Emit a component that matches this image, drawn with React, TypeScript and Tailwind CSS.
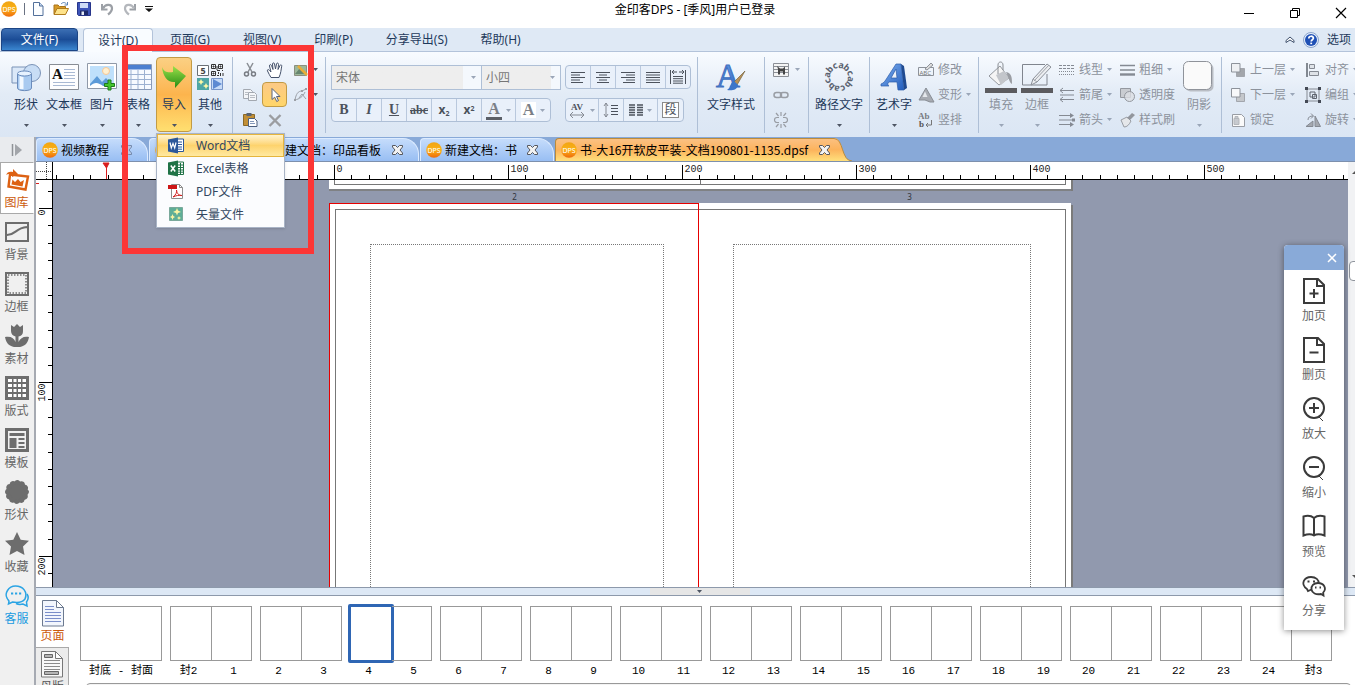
import { useState, type ReactNode } from "react";

const UI_FONT = "font-['Noto_Sans','Noto_Sans_CJK_SC',sans-serif]";
const DOC_FONT = "font-['Noto_Sans_CJK_SC',sans-serif]";
const STRIP_FONT = "font-['Liberation_Mono','Noto_Sans_CJK_SC',monospace]";

const RIBBON_TABS = ["页面(G)", "视图(V)", "印刷(P)", "分享导出(S)", "帮助(H)"];
const RULER_STEP = 17.4;
const G = "#858a93";

type IconProps = { w?: number; h?: number; box?: string; children: ReactNode };

const Svg = ({ w = 16, h = 16, box, children }: IconProps) => (
  <svg width={w} height={h} viewBox={box ?? `0 0 ${w} ${h}`} fill="none" className="shrink-0 overflow-visible" aria-hidden="true">
    {children}
  </svg>
);

const Caret = ({ dim = false }: { dim?: boolean }) => (
  <Svg w={5} h={3}>
    <path d="M0 0h5L2.5 3z" fill={dim ? "#9aa6b8" : "#4d5563"} />
  </Svg>
);

const DpsLogo = ({ size = 16 }: { size?: number }) => (
  <Svg w={size} h={size} box="0 0 16 16">
    <defs>
      <linearGradient id="dps" x1="0" y1="0" x2="0" y2="1">
        <stop offset="0" stopColor="#f0a413" />
        <stop offset="0.5" stopColor="#fbb216" />
        <stop offset="1" stopColor="#ee6a0c" />
      </linearGradient>
    </defs>
    <circle cx="8" cy="8" r="7.8" fill="url(#dps)" />
    <text x="8" y="10.6" fontSize="7" textAnchor="middle" fill="#fff" fontFamily="Noto Sans">DPS</text>
  </Svg>
);

/* ---------- title bar ---------- */

const quickActions = [
  {
    label: "新建",
    icon: (
      <Svg>
        <path d="M3.500 1.500h6l3.500 3.500v9.500h-9.500z" fill="#fbfdff" stroke="#53709b" />
        <path d="M9.500 1.500v3.500h3.500" fill="#c9dcf3" stroke="#53709b" />
      </Svg>
    )
  },
  {
    label: "打开",
    icon: (
      <Svg>
        <path d="M1 13V4h4l1.500 1.500h6V13z" fill="#d79a26" stroke="#a9731b" />
        <path d="M1 13.500 4 7.500h11.500L12.500 13.500z" fill="#fde28a" stroke="#b07c1d" />
        <path d="M8 3c2-2 4-2 6 .5M14.500 1v3h-3" stroke="#5b82b5" />
      </Svg>
    )
  },
  {
    label: "保存",
    icon: (
      <Svg>
        <path d="M1.500 1.500h13v13h-12l-1-1z" fill="#3d54b8" stroke="#27358a" />
        <path d="M4 2h8v5H4z" fill="#cfdcf6" />
        <path d="M4 9.500h8V14H4z" fill="#1e2a6a" />
        <path d="M5.500 10.500h2.500V14H5.500z" fill="#e6ecf8" />
      </Svg>
    )
  },
  {
    label: "撤销",
    icon: (
      <Svg>
        <path d="M3 3v5.500h5.500" stroke="#9ca0a6" strokeWidth="2" />
        <path d="M4 7.500C6 3 12.500 2.500 13 7c.2 3-2 5-4 6.500" stroke="#9ca0a6" strokeWidth="2.200" />
      </Svg>
    )
  },
  {
    label: "重做",
    icon: (
      <Svg>
        <path d="M13 3v5.500H7.500" stroke="#9ca0a6" strokeWidth="2" />
        <path d="M12 7.500C10 3 3.500 2.500 3 7c-.2 3 2 5 4 6.500" stroke="#b4b7bc" strokeWidth="2.200" />
      </Svg>
    )
  }
];

const TitleBar = () => (
  <header className="relative flex h-7 shrink-0 items-start bg-white">
    <div className="flex items-center gap-[7px] pt-px pl-px">
      <DpsLogo />
      <span className="h-3 w-px bg-gray-500" />
      <div className="-ml-0.5 flex gap-[7px]">
        {quickActions.map((item) => (
          <button key={item.label} type="button" aria-label={item.label}>
            {item.icon}
          </button>
        ))}
      </div>
      <button type="button" aria-label="自定义">
        <Svg w={8} h={6}>
          <path d="M0 0h8v1H0zM0 2.500h8L4 6z" fill="#111" />
        </Svg>
      </button>
    </div>
    <h1 className="absolute inset-x-0 top-px mx-auto w-fit pl-[35px] text-xs leading-[18px] text-black">
      金印客DPS - [季风]用户已登录
    </h1>
    <div className="relative ml-auto flex gap-[34px] pt-[7px] pr-2">
      <button type="button" aria-label="最小化">
        <Svg w={12} h={12}><path d="M1 6.500h10" stroke="#000" /></Svg>
      </button>
      <button type="button" aria-label="还原">
        <Svg w={12} h={12}><path d="M1.500 3.500h7v7h-7zM3.500 3.500v-2h7v7h-2" stroke="#000" /></Svg>
      </button>
      <button type="button" aria-label="关闭">
        <Svg w={12} h={12}><path d="m1 1 10 10M11 1 1 11" stroke="#000" strokeWidth="1.200" /></Svg>
      </button>
    </div>
  </header>
);

const RibbonTabs = () => (
  <nav className="flex h-6 shrink-0 items-end border-b border-[#b3c3da] bg-[#dfe9f5] text-xs text-[#1e395b]">
    <button
      type="button"
      className="ml-px h-[23px] w-[77px] rounded-t-sm border border-[#1c4585] bg-linear-to-b from-[#3c6fb4] via-[#1b4c96] to-[#3a86d0] text-white"
    >
      文件(F)
    </button>
    <button
      type="button"
      className="relative top-px ml-[5px] h-6 w-[70px] rounded-t border border-b-0 border-[#b3c3da] bg-[#f9fcff]"
    >
      设计(D)
    </button>
    <div className="ml-px flex h-full gap-px pt-px">
      {RIBBON_TABS.map((tab) => (
        <button key={tab} type="button" className="px-4">
          {tab}
        </button>
      ))}
    </div>
    <div className="ml-auto flex h-full items-center gap-2 pr-1">
      <button type="button" aria-label="折叠功能区">
        <Svg w={10} h={8}>
          <path d="M1 4.500 5 1l4 3.500v2L5 4 1 6.500z" fill="#fff" stroke="#3d4f6b" />
        </Svg>
      </button>
      <button type="button" aria-label="帮助">
        <Svg w={16} h={16}>
          <circle cx="8" cy="8" r="7.500" fill="#e6effb" stroke="#8ba4cc" />
          <circle cx="8" cy="8" r="6" fill="#1f50b5" />
          <path d="M5.800 6.500C5.800 3.500 10.500 3.500 10.400 6.300 10.300 7.800 8.200 7.800 8.200 9.500" stroke="#fff" strokeWidth="1.700" />
          <path d="M7.300 10.600h1.800v1.600H7.300z" fill="#fff" />
        </Svg>
      </button>
      <button type="button">选项</button>
    </div>
  </nav>
);

/* ---------- ribbon ---------- */

type BigButtonProps = { label: string; icon: ReactNode; width?: string; caret?: boolean; dim?: boolean; active?: boolean };

const BigButton = ({ label, icon, width = "w-9", caret = true, dim = false, active = false }: BigButtonProps) => (
  <button
    type="button"
    className={`flex h-[75px] ${width} shrink-0 flex-col items-center rounded-sm border pt-[3px] text-xs whitespace-nowrap ${
      active
        ? "border-[#c29b45] bg-linear-to-b from-[#fbd083] via-[#fcb44d] to-[#ffdf70]"
        : "border-transparent"
    } ${dim ? "text-[#8c929c]" : "text-[#1e395b]"}`}
  >
    <span className="flex h-8 items-center">{icon}</span>
    <span className="mt-[3px] leading-[18px]">{label}</span>
    <span className="mt-2.5 flex">{caret && <Caret dim={dim} />}</span>
  </button>
);

type SmallButtonProps = { label: string; icon: ReactNode; caret?: boolean };

const SmallButton = ({ label, icon, caret = false }: SmallButtonProps) => (
  <button type="button" className="flex h-[25px] items-center gap-1 text-xs whitespace-nowrap text-[#8c929c]">
    {icon}
    <span>{label}</span>
    {caret && <Caret dim />}
  </button>
);

const Group = ({ className, children }: { className: string; children: ReactNode }) => (
  <section className={`flex shrink-0 ${className}`}>
    {children}
    <span className="ml-auto h-[76px] w-px shrink-0 bg-[#aebfd6]" />
  </section>
);

const ShapeIcon = () => (
  <Svg w={30} h={30}>
    <path d="M1 5h17v16H1z" fill="#dbe8f8" stroke="#7b93b7" />
    <circle cx="21" cy="11" r="8.500" fill="#c8ddf5" stroke="#7b93b7" />
    <path d="M6.500 12v14c0 3.500 14 3.500 14 0V12" fill="#a9caf0" stroke="#6b8cbc" />
    <path d="M8.500 14v13h4V15z" fill="#f2f8ff" />
    <ellipse cx="13.500" cy="11.500" rx="7" ry="2.500" fill="#e7f2ff" stroke="#6b8cbc" />
  </Svg>
);

const TextBoxIcon = () => (
  <Svg w={30} h={26}>
    <path d="M.5.500h29v25H.500z" fill="#fdfdfe" stroke="#888d95" />
    <text x="3" y="15" fontFamily="Liberation Serif" fontSize="15" fontWeight="bold" fill="#111">A</text>
    <path d="M15 5.500h11M15 8.500h11M15 11.500h11M15 14.500h11M4 18.500h22M4 21.500h22" stroke="#a9b9d3" />
  </Svg>
);

const PictureIcon = () => (
  <Svg w={30} h={28}>
    <path d="M.5.500h29v25H.500z" fill="#fff" stroke="#8f99a8" />
    <path d="M3 3h24v20H3z" fill="#bfe0fb" />
    <circle cx="19" cy="8" r="3.500" fill="#fff0d0" stroke="#f7c796" />
    <path d="m3 21 7-8 5 6 4-4 8 8H3z" fill="#5d9bd8" />
    <path d="M3 23c5-5 9-3 13 0z" fill="#fff" />
    <path d="M21 17h3v3.500h3.500v3H24V27h-3v-3.500h-3.500v-3H21z" fill="#44c62c" stroke="#1f7a1b" />
  </Svg>
);

const TableIcon = () => (
  <Svg w={28} h={28}>
    <path d="M.5 1.500h27v25H.500z" fill="#f7faff" stroke="#8a9bb8" />
    <path d="M1 2h26v4.500H1z" fill="#4b7fd0" />
    <path d="M1 11.500h26M1 16.500h26M1 21.500h26M7 7v19M14 7v19M20.500 7v19" stroke="#9db1d1" />
  </Svg>
);

const ImportIcon = () => (
  <Svg w={28} h={28}>
    <defs>
      <linearGradient id="imp" x1="0" y1="0" x2="0" y2="1">
        <stop offset="0" stopColor="#9be04a" />
        <stop offset="1" stopColor="#258b12" />
      </linearGradient>
    </defs>
    <path d="M2 4c2 5 6 6 11 5V3l13 10-11 12v-6C8 20 3 14 2 4z" fill="url(#imp)" />
  </Svg>
);

const OtherIcon = () => (
  <Svg w={28} h={28}>
    <path d="M1.500 2.500h11v10h-11z" fill="#fff" stroke="#6b7076" />
    <text x="4.500" y="11" fontSize="9" fontWeight="bold" fill="#444" fontFamily="Noto Sans">5</text>
    <path d="M15.500 1.500h4v4h-4zM22.500 1.500h4v4h-4zM15.500 8.500h4v4h-4z" stroke="#333" />
    <path d="M17 3h1v1h-1zM24 3h1v1h-1zM17 10h1v1h-1zM21 3v4M21 7.500h3M26 7.500h1M22.500 9v2M24.500 10v3M27 10v3M21 12.500h2" stroke="#333" />
    <path d="M1 15h12v12H1z" fill="#4ea6a4" />
    <path d="m5 16 1 2 2 1-2 1-1 2-1-2-2-1 2-1zM10 20l1 2 2 1-2 1-1 2-1-2-2-1 2-1z" fill="#fdf8a5" />
    <path d="M15.500 15.500h11v11h-11z" fill="#c6dbf7" stroke="#7896c9" />
    <path d="m17 16 9 5-9 5z" fill="#5d8ad2" />
  </Svg>
);

const importItems = [
  {
    label: "Word文档",
    icon: (
      <Svg w={16} h={17}>
        <path d="M8 2h7.500v12.500H8z" fill="#fff" stroke="#2b579a" />
        <path d="M10 5h4M10 7.500h4M10 10h4M10 12.200h4" stroke="#2b579a" />
        <path d="M0 2.500 10 .5v16l-10-2z" fill="#2b579a" />
        <path d="m2 5.500 1.300 5.500L5 6.500 6.700 11 8 5.500" stroke="#fff" strokeWidth="1.200" />
      </Svg>
    )
  },
  {
    label: "Excel表格",
    icon: (
      <Svg w={16} h={17}>
        <path d="M8 2h7.500v12.500H8z" fill="#fff" stroke="#1f7246" />
        <path d="M10 5h5M10 7.500h5M10 10h5M10 12.200h5M12.500 3v11" stroke="#1f7246" />
        <path d="M0 2.500 10 .5v16l-10-2z" fill="#1f7246" />
        <path d="m2.800 5.500 4.400 6M7.200 5.500l-4.400 6" stroke="#fff" strokeWidth="1.500" />
      </Svg>
    )
  },
  {
    label: "PDF文件",
    icon: (
      <Svg w={16} h={17}>
        <path d="M3.500 1.500h8l3 3v11h-11z" fill="#fff" stroke="#8d8d8d" />
        <path d="M11.500 1.500v3h3" stroke="#8d8d8d" />
        <path d="M0 2h9v4H0z" fill="#cc1616" />
        <path d="M5 14c3-2 4-5 3.500-7 .5 4 2.500 5.500 5.500 5.500-3-.5-6 0-9 1.500z" stroke="#d02020" />
      </Svg>
    )
  },
  {
    label: "矢量文件",
    icon: (
      <Svg w={16} h={17}>
        <path d="M1.500 1.500h13v13h-13z" fill="#5fae97" stroke="#7aa99b" />
        <path d="m9 2 1 2.500L13 6l-3 1-1 2.500L8 7 5 6l3-1.500zM4.500 8l.8 2L7 11l-1.700 1-.8 2-.8-2L2 11l1.700-1zM11 10l.6 1.300 1.400.7-1.400.7L11 14l-.6-1.300L9 12l1.400-.7z" fill="#fbf4a2" />
      </Svg>
    )
  }
];

const ImportMenu = () => (
  <ul role="menu" className="absolute top-[76px] left-0 z-20 w-[129px] border border-[#a9b4c6] bg-[#fbfcfe] pb-px shadow-sm">
    {importItems.map((item, i) => (
      <li key={item.label} role="none">
        <button
          type="button"
          role="menuitem"
          className={`flex h-[23px] w-full items-center gap-3 border pl-[10px] text-xs whitespace-nowrap text-[#33475f] ${
            i === 0
              ? "border-[#e5b53d] bg-linear-to-b from-[#fff3cd] via-[#fdd36d] to-[#ffe9a0]"
              : "border-transparent"
          }`}
        >
          {item.icon}
          {item.label}
        </button>
      </li>
    ))}
  </ul>
);

const clipboardTools = [
  {
    label: "剪切",
    icon: <Svg><path d="m5 1 5 9M11 1 6 10" stroke="#8a8e94" strokeWidth="1.500" /><circle cx="4.500" cy="12" r="2" stroke="#777b82" strokeWidth="1.500" /><circle cx="11.500" cy="12" r="2" stroke="#777b82" strokeWidth="1.500" /></Svg>
  },
  {
    label: "平移",
    icon: (
      <Svg w={18} h={18}>
        <path
          d="M5 16.500c-1-2-2.500-4-3.500-6.500-.5-1.500 1-2 2-.5L5 11 3.500 5c-.3-1.500 1.400-2 2-.5L7 8.500 6.500 3c0-1.500 2-1.500 2 0L9.500 8 10.500 3c.3-1.500 2-1.200 2 .3L12 8.500l2-4c.6-1.300 2-.6 1.700.7C15 9 15 12 13 16.500z"
          fill="#fff"
          stroke="#44516b"
        />
      </Svg>
    )
  },
  {
    label: "编辑图片",
    caret: true,
    icon: <Svg><path d="M1.500 3.500h12v10h-12z" fill="#9db89a" stroke="#8b8f80" /><path d="m2 12 5-6 5 6z" fill="#67866f" /><path d="m5 4 9 9" stroke="#e7ad3a" strokeWidth="2.500" /></Svg>
  },
  {
    label: "复制",
    icon: <Svg><path d="M1.500 2.500h7l2 2v7h-9z" fill="#f4f6f9" stroke="#a3a8b0" /><path d="M6.500 5.500h6l2 2v6h-8z" fill="#f4f6f9" stroke="#a3a8b0" /><path d="M8 8.500h5M8 10.500h5M3 5.500h3M3 7.500h3" stroke="#b9bdc4" /></Svg>
  },
  {
    label: "选择",
    active: true,
    icon: <Svg><path d="M5 1.500v11l2.700-2.300 2 4.300 1.800-.9-2-4.100H13z" fill="#fff" stroke="#58627a" /></Svg>
  },
  {
    label: "编辑节点",
    caret: true,
    icon: <Svg><path d="M2 13C3 7 5 4 9 4M2 13c4-1 8-3 10-8M9 4l4-2" stroke="#9b9fa6" /><path d="M1 12h2v2H1zM8 3h2v2H8zM12 1h2v2h-2z" fill="#9b9fa6" /><path d="m6 11 3-4 4 5" stroke="#9b9fa6" /></Svg>
  },
  {
    label: "粘贴",
    icon: <Svg><path d="M1.500 2.500h11v11h-11z" fill="#c28f36" stroke="#8a6827" /><path d="M4.500 1h5v3h-5z" fill="#5c6470" /><path d="M6.500 6.500h6l2.500 2.500v5.500H6.500z" fill="#fff" stroke="#4c5e7c" /><path d="M8 9.500h4M8 11.500h5" stroke="#8498b9" /></Svg>
  },
  {
    label: "删除",
    icon: <Svg><path d="m2.500 3 11 11M13.500 3l-11 11" stroke="#9b9da1" strokeWidth="2.400" /></Svg>
  }
];

const TOOL_BOX = "flex h-6 items-center rounded-sm border border-[#aebfd6] bg-[#e9f0fa] divide-x divide-[#b9c8dd]";
const D = "#4c525c";

const alignTools: { label: string; lines: string }[] = [
  { label: "左对齐", lines: "M0 .5h14M0 3h9M0 5.500h14M0 8h9M0 10.500h12" },
  { label: "居中", lines: "M0 .5h14M3 3h8M0 5.500h14M3 8h8M1 10.500h12" },
  { label: "右对齐", lines: "M0 .5h14M5 3h9M0 5.500h14M5 8h9M2 10.500h12" },
  { label: "两端对齐", lines: "M0 .5h14M0 3h14M0 5.500h14M0 8h14M0 10.500h14" }
];

const ToolButton = ({ label, width = "w-[25px]", children }: { label: string; width?: string; children: ReactNode }) => (
  <button type="button" aria-label={label} className={`flex h-full ${width} items-center justify-center gap-1 text-[#4c525c]`}>
    {children}
  </button>
);

const FontGroup = () => (
  <Group className="w-[372px] pl-[5px]">
    <div className="flex flex-col gap-2 pt-2 text-xs text-[#767676]">
      <div className="flex">
        {[
          { label: "字体", value: "宋体", width: "w-[151px]" },
          { label: "字号", value: "小四", width: "w-20 -ml-px" }
        ].map((field) => (
          <div key={field.label} className={`relative ${field.width}`}>
            <select
              aria-label={field.label}
              className="h-[25px] w-full appearance-none border border-[#aebfd6] bg-linear-to-r from-[#eeeeee] from-88% to-[#f4f8fd] to-88% pl-1"
            >
              <option>{field.value}</option>
            </select>
            <span className="pointer-events-none absolute top-[11px] right-[6px] flex">
              <Caret dim />
            </span>
          </div>
        ))}
        <div className={`${TOOL_BOX} ml-1`}>
          {alignTools.map((tool) => (
            <ToolButton key={tool.label} label={tool.label}>
              <Svg w={14} h={11}><path d={tool.lines} stroke={D} strokeWidth="1.200" /></Svg>
            </ToolButton>
          ))}
          <ToolButton label="分散对齐" width="w-6">
            <Svg w={16} h={16}>
              <path d="M.5 1v14M15.500 1v14M2 3h5M9 3h5M4 1 2 3l2 2M12 1l2 2-2 2M3 7.500h10M3 9.700h10M3 12h10M3 14.200h10" stroke={D} />
            </Svg>
          </ToolButton>
        </div>
      </div>
      <div className="flex gap-[14px]">
        <div className={TOOL_BOX}>
          <ToolButton label="加粗"><b className="font-['Liberation_Serif',serif] text-sm">B</b></ToolButton>
          <ToolButton label="斜体"><i className="font-['Liberation_Serif',serif] text-sm font-bold">I</i></ToolButton>
          <ToolButton label="下划线"><b className="font-['Liberation_Serif',serif] text-sm underline">U</b></ToolButton>
          <ToolButton label="删除线"><s className="font-['Liberation_Serif',serif] text-xs font-bold">abc</s></ToolButton>
          <ToolButton label="下标"><b className="text-xs">x<sub className="text-[7px]">2</sub></b></ToolButton>
          <ToolButton label="上标"><b className="text-xs">x<sup className="text-[7px]">2</sup></b></ToolButton>
          <ToolButton label="字体颜色" width="w-[34px]">
            <b className="border-b-3 border-[#5a5f68] px-0.5 font-['Liberation_Serif',serif] text-base leading-4 text-[#7b7f87]">A</b>
            <Caret dim />
          </ToolButton>
          <ToolButton label="突出显示" width="w-[34px]">
            <b className="bg-white px-0.5 font-['Liberation_Serif',serif] text-base leading-4 text-[#7b7f87]">A</b>
            <Caret dim />
          </ToolButton>
        </div>
        <div className={TOOL_BOX}>
          <ToolButton label="字间距" width="w-[33px]">
            <Svg w={17} h={17}>
              <text x="8" y="8" fontSize="9" fontWeight="bold" textAnchor="middle" fill={D} fontFamily="Liberation Serif">AV</text>
              <path d="M1 13h14M4 10l-3 3 3 3M12 10l3 3-3 3" stroke={G} />
            </Svg>
            <Caret dim />
          </ToolButton>
          <ToolButton label="行距">
            <Svg w={16} h={16}>
              <path d="M3 1v14M1 4l2-3 2 3M1 12l2 3 2-3" stroke={G} />
              <path d="M8 3.500h7M8 6.500h7M8 9.500h7M8 12.500h7" stroke={D} strokeWidth="1.200" />
            </Svg>
          </ToolButton>
          <ToolButton label="分栏" width="w-[34px]">
            <Svg w={14} h={12}>
              <path d="M0 1h6M8 1h6M0 3.500h6M8 3.500h6M0 6h6M8 6h6M0 8.500h6M8 8.500h6M0 11h6M8 11h6" stroke={D} strokeWidth="1.300" />
            </Svg>
            <Caret dim />
          </ToolButton>
          <ToolButton label="段落">
            <span className="border border-[#8a8a8a] bg-white px-px text-xs leading-[14px]">段</span>
          </ToolButton>
        </div>
      </div>
    </div>
  </Group>
);

const TextStyleIcon = () => (
  <Svg w={32} h={30}>
    <defs>
      <linearGradient id="ablue" x1="0" y1="0" x2="1" y2="1">
        <stop offset="0" stopColor="#7fb0f0" />
        <stop offset="1" stopColor="#225dbd" />
      </linearGradient>
    </defs>
    <text x="1" y="25" fontFamily="Liberation Serif" fontSize="33" fill="url(#ablue)" stroke="#3f6fbe">A</text>
    <path d="M30 9 19 20l3 3z" fill="#b99055" stroke="#75643f" strokeWidth=".7" />
    <path d="M19 19c-4 1-3 7-7 9 5 1 10 0 11-5z" fill="#3c75c9" />
  </Svg>
);

const PathTextIcon = () => (
  <Svg w={30} h={30}>
    {"abcabcabcabc".split("").map((ch, i) => (
      <text
        key={i}
        x="15"
        y="6"
        fontSize="9"
        fontWeight="bold"
        textAnchor="middle"
        fill="#5a6270"
        fontFamily="Noto Sans"
        transform={`rotate(${i * 30 - 80} 15 15)`}
      >
        {ch}
      </text>
    ))}
  </Svg>
);

const WordArtIcon = () => (
  <Svg w={30} h={30}>
    <path d="M2 22c3-1 4-3 6-6L17 2h5l3 26h-6l-1-8H10c-2 2-1 3 0 4H2zM12 16h6l-1-9z" fill="url(#ablue)" stroke="#2b5ca9" strokeWidth=".7" fillRule="evenodd" />
    <path d="M22 2 25 28l3-2-3-22z" fill="#1f4a91" />
  </Svg>
);

const FillIcon = () => (
  <Svg w={32} h={32}>
    <path d="M4 15 15 5l9 12-10 7z" fill="#f5f5f5" stroke="#94989e" />
    <path d="M11 14 16 24l8-7-5-7z" fill="#c3c6cb" />
    <path d="M13 13V4c0-4 5-4 5 0v5" stroke="#8a8e94" />
    <path d="M21 11c6 1 6 6 6 12-3-2-3-6-6-12z" fill="#9a9da3" />
    <path d="M0 27h32v5H0z" fill="#5b5b5f" />
  </Svg>
);

const BorderIcon = () => (
  <Svg w={32} h={32}>
    <path d="M26 13v11H1.500V3.500H24" stroke="#80858e" />
    <path d="m10 24 2-6L26 3l4 3-14 15z" fill="#eceef1" stroke="#8b9099" />
    <path d="m12 18 4 3M28 4l-15 16" stroke="#9da2aa" />
    <path d="M0 27h32v5H0z" fill="#5b5b5f" />
  </Svg>
);

const ShadowIcon = () => (
  <Svg w={32} h={32}>
    <rect x="2.500" y="2.500" width="28" height="28" rx="5" fill="#b9bdc4" />
    <rect x=".5" y=".5" width="28" height="28" rx="5" fill="#fafafa" stroke="#8f939a" />
  </Svg>
);

const LayerIcon = ({ up = false }: { up?: boolean }) => (
  <Svg>
    <path d="M6.500 6.500h8v8h-8z" fill={up ? "#a3a6ab" : "#c4c7cb"} stroke="#a2a6ad" />
    <path d="M1.500 1.500h8.500v8.500H1.500z" fill={up ? "#eef0f3" : "#f7f8fa"} stroke="#8d929a" />
  </Svg>
);

const Ribbon = () => (
  <div className="relative z-10 flex h-[85px] shrink-0 bg-linear-to-b from-[#f8fbff] via-[#e2ebf6] to-[#dbe6f4] pt-[5px]">
    <Group className="w-[233px] pl-2">
      <BigButton label="形状" icon={<ShapeIcon />} />
      <BigButton label="文本框" width="w-10" icon={<TextBoxIcon />} />
      <BigButton label="图片" icon={<PictureIcon />} />
      <BigButton label="表格" icon={<TableIcon />} />
      <div className="relative">
        <BigButton label="导入" active icon={<ImportIcon />} />
        <ImportMenu />
      </div>
      <BigButton label="其他" icon={<OtherIcon />} />
    </Group>
    <Group className="w-[93px] pl-1">
      <div className="grid h-[75px] grid-cols-[25px_25px_32px] grid-rows-3">
        {clipboardTools.map((tool) => (
          <button
            key={tool.label}
            type="button"
            aria-label={tool.label}
            className={`flex items-center gap-1 rounded-sm border ${tool.caret ? "justify-end" : "justify-center"} ${
              tool.active ? "border-[#c29b45] bg-linear-to-b from-[#fcc985] to-[#ffd568]" : "border-transparent"
            }`}
          >
            {tool.icon}
            {tool.caret && <Caret />}
          </button>
        ))}
      </div>
    </Group>
    <FontGroup />
    <Group className="w-[67px] pl-[3px]">
      <BigButton label="文字样式" width="w-[60px]" caret={false} icon={<TextStyleIcon />} />
    </Group>
    <Group className="w-11 pl-2">
      <div className="flex flex-col">
        <button type="button" aria-label="图文环绕" className="flex h-[25px] items-center gap-1.5">
          <Svg>
            <path d="M.5 1.500h15v13H.500z" fill="#f4f4f4" stroke="#8b8f96" />
            <path d="M1 4.500h14M1 7.500h14M1 10.500h14" stroke="#8b8f96" />
            <path d="M4 4l3 2.500h3l2-2v8h-2v-3H7v3H5V7z" fill="#444" />
          </Svg>
          <Caret dim />
        </button>
        <button type="button" aria-label="链接" className="flex h-[25px] items-center">
          <Svg><rect x="1" y="5.500" width="7.500" height="5" rx="2.500" stroke="#999da4" strokeWidth="1.500" /><rect x="7.500" y="5.500" width="7.500" height="5" rx="2.500" stroke="#999da4" strokeWidth="1.500" /></Svg>
        </button>
        <button type="button" aria-label="取消链接" className="flex h-[25px] items-center">
          <Svg><path d="M6 5.500H4a2.500 2.500 0 0 0 0 5h2M10 5.500h2a2.500 2.500 0 0 1 0 5h-2M8 0v4M8 12v4M3 1l2.500 3M13 1l-2.500 3M3 15l2.500-3M13 15l-2.500-3" stroke="#999da4" strokeWidth="1.200" /></Svg>
        </button>
      </div>
    </Group>
    <Group className="w-[61px]">
      <BigButton label="路径文字" width="w-[60px]" icon={<PathTextIcon />} />
    </Group>
    <Group className="w-[109px]">
      <BigButton label="艺术字" width="w-12" icon={<WordArtIcon />} />
      <div>
        <SmallButton
          label="修改"
          icon={<Svg><path d="M.5 5.500h15v8H.500z" stroke="#8d929a" /><text x="1.500" y="12.500" fontSize="6" fill="#777" fontFamily="Noto Sans">ABC</text><path d="m7 7 6-6 2 2-6 5z" fill="#ddd" stroke="#8d929a" /></Svg>}
        />
        <SmallButton label="变形" caret icon={<Svg><path d="M8 1 1 13h6l5 2h4z" fill="#a7abb2" stroke="#888d95" /><path d="M7 4.500 4.500 10h5z" fill="#e4e7eb" /></Svg>} />
        <SmallButton
          label="竖排"
          icon={<Svg><text x="0" y="7" fontSize="9" fontWeight="bold" fill="#777b83" fontFamily="Liberation Serif">Ab</text><text x="1" y="15" fontSize="9" fontWeight="bold" fill="#555" fontFamily="Liberation Serif">b</text><path d="M13.500 8v5H8M10 11l-2 2 2 2" stroke="#777" /></Svg>}
        />
      </div>
    </Group>
    <Group className="w-[243px] pl-1">
      <BigButton label="填充" dim icon={<FillIcon />} />
      <BigButton label="边框" dim icon={<BorderIcon />} />
      <div className="ml-1 w-[59px]">
        <SmallButton label="线型" caret icon={<Svg><path d="M0 3.500h16M0 6.500h16" stroke={G} strokeDasharray="3 1" /><path d="M0 9.500h16M0 12.500h16" stroke={G} strokeDasharray="1 1" /></Svg>} />
        <SmallButton label="箭尾" caret icon={<Svg><path d="M1 3.500h14M1 8h14M1 12.500h14M4 1 1 3.500 4 6M4 10l-3 2.500L4 15" stroke={G} /></Svg>} />
        <SmallButton label="箭头" caret icon={<Svg><path d="M0 3.500h14M0 8h14M0 12.500h14" stroke={G} /><path d="M11 1l4 2.500L11 6zM13 6.500h3v3h-3zM11 10l4 2.500-4 2.500z" fill={G} /></Svg>} />
      </div>
      <div className="ml-px w-[62px]">
        <SmallButton label="粗细" caret icon={<Svg><path d="M1 3.500h15M1 8h15" stroke={G} strokeWidth="1.600" /><path d="M1 12.500h15" stroke={G} strokeWidth="2.400" /></Svg>} />
        <SmallButton label="透明度" icon={<Svg><path d="M1.500 1.500h10v9h-10z" fill="#c9ccd1" stroke="#94989f" /><circle cx="10.500" cy="9.500" r="5" fill="#dcdfe3" fillOpacity=".8" stroke="#94989f" /></Svg>} />
        <SmallButton label="样式刷" icon={<Svg><path d="m2 8 6-3 4 4c-2 4-4 6-7 6z" fill="#e5e7ea" stroke="#999da4" /><path d="m8 6 5-5 3 2-5 5z" fill="#92969d" /></Svg>} />
      </div>
      <BigButton label="阴影" dim icon={<ShadowIcon />} />
    </Group>
    <section className="flex min-w-0 flex-1 overflow-hidden pl-2">
      <div className="w-[75px] shrink-0">
        <SmallButton label="上一层" caret icon={<LayerIcon up />} />
        <SmallButton label="下一层" caret icon={<LayerIcon />} />
        <SmallButton label="锁定" icon={<Svg><path d="M2.500 2.500h9l3 3v9h-12z" fill="#fafafa" stroke="#999da4" /><path d="M4 6.500h5v6H4zM5 6V4.500h3V6" fill="#c7cacf" stroke="#b3b6bb" /></Svg>} />
      </div>
      <div className="shrink-0">
        <SmallButton label="对齐" caret icon={<Svg><path d="M2 1v14" stroke="#5e646e" strokeWidth="1.500" /><path d="M4.500 2.500h5v4h-5zM4.500 9.500h9v4h-9z" fill="#dfe3e8" stroke={G} /></Svg>} />
        <SmallButton label="编组" caret icon={<Svg><path d="M2 2h12v12H2z" stroke={G} /><path d="M5 5h5v5H5zM7.500 7.500h4v4h-4z" stroke="#5e646e" /><path d="M0 0h3v3H0zM13 0h3v3h-3zM0 13h3v3H0zM13 13h3v3h-3z" fill="#444a55" /></Svg>} />
        <SmallButton label="旋转" caret icon={<Svg><path d="M1 14.500 8 9v5.500zM10 14.500V4l5.500 10.500z" fill="#a4a8af" stroke={G} /><path d="M3 8c0-3 2-4 5-4M6 1.500 8.500 4 6 6.500" stroke={G} /></Svg>} />
      </div>
    </section>
  </div>
);

/* ---------- left sidebar ---------- */

const S = "#6d6d6d";

const sideItems = [
  {
    label: "图库",
    color: "text-[#cc5a0b]",
    icon: (
      <>
        <path d="m5 6.500 18 2-2.500 13-17-3z" stroke="#dd6113" strokeWidth="2.400" />
        <path d="m6.500 16.500 1-5 2.500 2.500 3-3 2.500 3 3.500-2-1.500 6.500z" fill="#dd6113" />
        <path d="M1 7c1-3 4-4 7-3V1l5 5-6 3V6.500C5 5.500 2.500 6 1 7z" fill="#dd6113" />
      </>
    )
  },
  { label: "背景", icon: <path d="M1 3h22v18H1zM2 15c9 0 8-7 20-8" stroke={S} strokeWidth="2" /> },
  {
    label: "边框",
    icon: (
      <>
        <path d="M1 1h22v22H1z" stroke={S} strokeWidth="2" />
        <path d="M3 3h18v18H3z" stroke={S} strokeWidth="1.500" strokeDasharray="1.500 1.500" />
      </>
    )
  },
  {
    label: "素材",
    icon: <path d="M6 1l3 2 3-3 3 3 3-2v6c0 4-2 5-4.500 5.500V18c2-4 5-6 10.500-5-1 6-4 9-9 10h-6C4 22 1 19 0 13c6-1 9 1 10.500 5v-5.500C8 12 6 10 6 7z" fill={S} />
  },
  {
    label: "版式",
    icon: (
      <>
        <path d="M0 0h24v24H0z" fill={S} />
        <path d="M3 3h4v3H3zM8.500 3h3v3h-3zM13 3h3v3h-3zM17.500 3H21v3h-3.500zM3 8h4v3H3zM8.500 8h3v3h-3zM13 8h3v3h-3zM17.500 8H21v3h-3.500zM3 13h4v3H3zM8.500 13h3v3h-3zM13 13h3v3h-3zM17.500 13H21v3h-3.500zM3 18h4v3H3zM8.500 18h3v3h-3zM13 18h3v3h-3zM17.500 18H21v3h-3.500z" fill="#fff" />
      </>
    )
  },
  {
    label: "模板",
    icon: (
      <>
        <path d="M0 0h24v24H0z" fill={S} />
        <path d="M3 3h18v18H3z" fill="#f0f0f0" />
        <path d="M4.500 5h15v3h-15zM4.500 10h7v10h-7zM13.500 10h6v2h-6zM13.500 14h6v2h-6zM13.500 18h6v2h-6z" fill={S} />
      </>
    )
  },
  {
    label: "形状",
    icon: (
      <>
        <circle cx="12" cy="12" r="11" fill={S} />
        <circle cx="12" cy="12" r="9.500" stroke={S} strokeWidth="5" strokeLinecap="round" strokeDasharray="0.1 4.874" />
      </>
    )
  },
  { label: "收藏", icon: <path d="m12 0 3.700 7.700 8.300 1-6 5.800 1.500 8.500L12 19l-7.500 4L6 14.500 0 8.700l8.300-1z" fill={S} /> },
  {
    label: "客服",
    color: "text-[#1b9be0]",
    icon: (
      <>
        <path d="M20 15c3-7-2-13-9.500-13S-.5 10 2 14c1 2 2 2.500 2 3.500L3.500 20l4-2c5 1 10 0 12.500-3z" stroke="#2ba4e4" strokeWidth="1.500" />
        <path d="M22 10c2 3 1 6-.5 8l.5 4-4-2c-2 .5-5 .5-7-.500" stroke="#2ba4e4" strokeWidth="1.500" />
        <path d="M6 9.500h2.200M10 9.500h2.200M14 9.500h2.200" stroke="#2ba4e4" strokeWidth="2" />
      </>
    )
  }
];

const Sidebar = () => (
  <aside className="w-9 shrink-0 border-r-2 border-[#a6aab2] bg-[#f0f0f0]">
    <button type="button" aria-label="展开" className="flex h-[25px] w-full items-center justify-center bg-[#e9ebee]">
      <Svg w={12} h={12}>
        <path d="M1.500 0v12" stroke="#8f9297" strokeWidth="1.500" />
        <path d="M4 0v12l7-6z" fill="#a2a5aa" />
      </Svg>
    </button>
    {sideItems.map((item, i) => (
      <button
        key={item.label}
        type="button"
        className={`flex h-[52px] w-full flex-col items-center justify-end gap-0.5 border pr-px pb-px text-xs leading-[18px] ${
          i === 0 ? "border-[#a9a9a9] border-r-transparent bg-white" : "border-transparent"
        } ${item.color ?? "text-[#666]"}`}
      >
        <Svg w={24} h={24}>{item.icon}</Svg>
        {item.label}
      </button>
    ))}
  </aside>
);

/* ---------- document tabs ---------- */

const CloseMark = ({ dim = false }: { dim?: boolean }) => (
  <Svg w={11} h={10}>
    <path
      d="M.5.500h3l2 2 2-2h3v1.500L8 5l2.500 3v1.500h-3l-2-2-2 2h-3V8L3 5 .5 2z"
      fill={dim ? "#b9cbe8" : "#f3f3f3"}
      stroke={dim ? "#7389ac" : "#56585e"}
    />
  </Svg>
);

const docTabs = [
  { title: "视频教程", width: "w-28", dim: true },
  { title: "新建文档：印品看板", width: "w-[270px]", push: true },
  { title: "新建文档：书", width: "w-[134px]" }
];

const DocTabs = () => (
  <div className={`flex h-[25px] shrink-0 items-end gap-px overflow-hidden border-b border-[#7d90ad] bg-[#88a9d8] ${DOC_FONT} text-xs text-black`}>
    {docTabs.map((tab) => (
      <div
        key={tab.title}
        className={`flex h-[23px] ${tab.width} shrink-0 items-center gap-[3px] rounded-tl-sm rounded-tr-2xl border border-b-0 border-[#dcebff] bg-linear-to-b from-[#c5dcfb] to-[#98bef3] pr-[15px] pl-[5px]`}
      >
        <DpsLogo />
        <span className={`whitespace-nowrap ${tab.push ? "ml-auto" : "mr-auto"}`}>{tab.title}</span>
        <button type="button" aria-label={`关闭 ${tab.title}`} className={tab.push ? "ml-2" : ""}>
          <CloseMark dim={tab.dim} />
        </button>
      </div>
    ))}
    <div className="flex h-[23px] shrink-0">
      <div className="flex items-center gap-[3px] rounded-tl-sm border-t border-l border-[#b98b3d] bg-linear-to-b from-[#fbc183] via-[#fcb35c] to-[#ffe07c] pl-[5px]">
        <DpsLogo />
        <span className="whitespace-nowrap">书-大16开软皮平装-文档190801-1135.dpsf</span>
        <button type="button" aria-label="关闭当前文档" className="ml-2">
          <CloseMark />
        </button>
      </div>
      <Svg w={22} h={23}>
        <defs>
          <linearGradient id="tabEnd" x1="0" y1="0" x2="0" y2="1">
            <stop offset="0" stopColor="#fbc183" />
            <stop offset="0.5" stopColor="#fcb35c" />
            <stop offset="1" stopColor="#ffe07c" />
          </linearGradient>
        </defs>
        <path d="M0 0h4c10 0 7 23 18 23H0z" fill="url(#tabEnd)" />
        <path d="M0 .5h4c10 0 7 22.500 18 22.500" stroke="#b98b3d" />
      </Svg>
    </div>
  </div>
);

/* ---------- rulers ---------- */

const range = (from: number, to: number) => Array.from({ length: to - from + 1 }, (_, i) => from + i);

const HorizontalRuler = () => (
  <svg className="h-[18px] min-w-0 flex-1 bg-white" aria-hidden="true">
    {range(-16, Math.floor((window.innerWidth - 340) / RULER_STEP)).map((n) => {
      const x = Math.round(281 + n * RULER_STEP) + 0.5;
      const major = n >= 0 && n % 10 === 0;
      return (
        <g key={n}>
          <path d={`M${x} ${major ? 3 : 13}v18`} stroke="#000" />
          {major && (
            <text x={x + 2} y="10" fontSize="10" fontFamily="Liberation Mono" fill="#222">{n * 10}</text>
          )}
        </g>
      );
    })}
    <path d="M53.500 2v16M50 1h6l-2.500 5z" stroke="#d81e1e" fill="#d81e1e" />
    <path d="M0 17.500h4000" stroke="#000" />
  </svg>
);

const VerticalRuler = () => (
  <svg className="h-full w-[17px] shrink-0 bg-white" aria-hidden="true">
    {range(-1, Math.floor((window.innerHeight - 300) / RULER_STEP)).map((n) => {
      const y = Math.round(28 + n * RULER_STEP) + 0.5;
      const major = n >= 0 && n % 10 === 0;
      return (
        <g key={n}>
          <path d={`M${major ? 3 : 12} ${y}h14`} stroke="#000" />
          {major && (
            <text
              x="9"
              y={y}
              dx="-1"
              fontSize="10"
              fontFamily="Liberation Mono"
              fill="#222"
              textAnchor="end"
              transform={`rotate(-90 9 ${y})`}
            >
              {n * 10}
            </text>
          )}
        </g>
      );
    })}
    <path d="M0 3.500h3" stroke="#d81e1e" />
    <path d="M16.500 0v4000" stroke="#000" />
  </svg>
);

/* ---------- canvas ---------- */

const Canvas = () => (
  <main className="flex min-w-0 flex-1 flex-col items-center overflow-hidden bg-[#9199ae] pr-px">
    <div className="h-[11px] w-[742px] shrink-0 border-b-2 border-[#7f8184] bg-white px-[5px] shadow-[2px_0_0_#7b7b7b]">
      <div className="flex h-[5px] border-x border-b border-[#777]">
        <div className="flex-1 border-r border-[#777]" />
        <div className="flex-1" />
      </div>
    </div>
    <div className="flex h-3 w-[742px] shrink-0 items-center text-[8px] leading-none text-[#30343c]">
      <span className="w-1/2 text-center">2</span>
      <span className="w-1/2 pl-12 text-center">3</span>
    </div>
    <div className="flex min-h-0 w-[742px] flex-1 shrink-0 bg-white shadow-[2px_2px_0_#7b7b7b]">
      <div className="flex min-w-0 flex-1 bg-[#e60000] px-px pt-px">
        <div className="flex-1 bg-white pt-[5px] pl-[5px]">
          <div className="h-full border-t border-l border-[#777] px-[34px] pt-[34px]">
            <div className="h-full border border-b-0 border-dotted border-[#777]" />
          </div>
        </div>
      </div>
      <div className="min-w-0 flex-1 pt-1.5 pr-[5px]">
        <div className="h-full border-t border-r border-[#777] px-[34px] pt-[34px]">
          <div className="h-full border border-b-0 border-dotted border-[#777]" />
        </div>
      </div>
    </div>
  </main>
);

/* ---------- page strip ---------- */

const spreads: string[][] = [
  ["封底 - 封面"],
  ["封2", "1"],
  ...range(1, 11).map((n) => [String(n * 2), String(n * 2 + 1)]),
  ["24", "封3"]
];

const PageIcon = ({ tint, line }: { tint: string; line: string }) => (
  <Svg w={24} h={27}>
    <path d="M1.500.500h14l7 7v18.500h-21z" fill={tint} stroke="#6c7a90" />
    <path d="M15.500.500v7h7z" fill="#fff" stroke="#6c7a90" />
    <path d="M4 6.500h9M4 9.500h9M4 12.500h16M4 15.500h16M4 18.500h16M4 21.500h16" stroke={line} />
  </Svg>
);

const MasterIcon = () => (
  <Svg w={24} h={27}>
    <path d="M1.500.500h14l7 7v18.500h-21z" fill="#f8f8f8" stroke="#777" />
    <path d="M15.500.500v7h7z" fill="#fff" stroke="#777" />
    <path d="M4.500 3.500h8v3h-8zM4.500 20.500h14v3h-14z" fill="#b5b5b5" stroke="#666" />
    <path d="M4 9.500h16M4 12.500h16M4 15.500h16M4 18.500h16" stroke="#8a8a8a" />
  </Svg>
);

const PageStrip = ({ current, onSelect }: { current: string; onSelect: (page: string) => void }) => (
  <footer className="flex h-[89px] shrink-0 overflow-hidden bg-white">
    <div className="flex w-[33px] shrink-0 flex-col bg-[#f0f0f0] text-xs leading-[18px]">
      <button type="button" className="flex h-[52px] shrink-0 flex-col items-center border-b border-[#a9a9a9] bg-white pt-1 text-[#cc5a0b]">
        <PageIcon tint="#f2f6fd" line="#7a8ec9" />
        页面
      </button>
      <button type="button" className="flex h-[52px] shrink-0 flex-col items-center border-r border-[#a9a9a9] bg-[#ececec] pt-[3px] text-[#555]">
        <MasterIcon />
        母版
      </button>
    </div>
    <div className="flex min-w-0 flex-1 flex-col pl-[7px]">
      <div className="flex pt-[10px]">
        {spreads.map((pages) => (
          <div key={pages[0]} className="w-[90px] shrink-0">
            <div className="mx-1 flex h-[55px]">
              {pages.map((page, i) => (
                <button
                  key={page}
                  type="button"
                  aria-label={page}
                  onClick={() => onSelect(page)}
                  className={`flex-1 ${
                    page === current
                      ? "-m-0.5 rounded-xs border-3 border-[#2f66b4]"
                      : `border border-[#999] ${i > 0 ? "border-l-0" : ""}`
                  }`}
                />
              ))}
            </div>
            <div className={`flex text-center text-[11px] leading-5 text-black ${STRIP_FONT}`}>
              {pages.map((page) => (
                <span key={page} className="flex-1 whitespace-nowrap">{page}</span>
              ))}
            </div>
          </div>
        ))}
      </div>
      <div className="mt-0.5 mr-1 ml-2.5 h-4 shrink-0 rounded-sm border border-[#999] bg-[#f3f3f3]" />
    </div>
  </footer>
);

/* ---------- floating palette ---------- */

const K = "#3a3a3a";

const paletteItems = [
  { label: "加页", icon: <path d="M2 1h14l6 6v18H2zM15 1v7h7M12 11v9M7.500 15.500h9" stroke={K} strokeWidth="2" /> },
  { label: "删页", icon: <path d="M2 1h14l6 6v18H2zM15 1v7h7M7.500 15.500h9" stroke={K} strokeWidth="2" /> },
  {
    label: "放大",
    icon: (
      <>
        <circle cx="12" cy="12" r="10" stroke={K} strokeWidth="2" />
        <path d="M7 12h10M12 7v10" stroke={K} strokeWidth="2" />
        <path d="m17 21 4 4" stroke={K} />
      </>
    )
  },
  {
    label: "缩小",
    icon: (
      <>
        <circle cx="12" cy="12" r="10" stroke={K} strokeWidth="2" />
        <path d="M7 12h10" stroke={K} strokeWidth="2" />
        <path d="m17 21 4 4" stroke={K} />
      </>
    )
  },
  { label: "预览", icon: <path d="M12 4v17M12 4C9 1.500 5 1.500 1.500 2.500v19c4-1.500 8-1.500 10.500 0 2.500-1.500 6.500-1.500 10.500 0v-19C19 1.500 15 1.500 12 4z" stroke={K} strokeWidth="2" /> },
  {
    label: "分享",
    icon: (
      <>
        <path d="M9.500 16.500 6 18l-1-2C-2 11 2 4 9 4c5 0 8 3 7.500 6" stroke={K} strokeWidth="1.800" />
        <path d="M16 10c-4.500 0-7 3-6.500 6.500S14 22 19 21l2.500 1.500-.3-3C25 15.500 22 10 16 10z" stroke={K} strokeWidth="1.800" />
        <path d="M5.500 8.500h2M11 8.500h2M13 14.500h1.500M17.500 14.500H19" stroke={K} strokeWidth="2" />
      </>
    )
  }
];

const Palette = () => (
  <div className="absolute top-[245px] right-[11px] z-10 w-[60px] rounded-t bg-white pb-1.5 shadow-[0_1px_6px_rgba(0,0,0,0.45)]">
    <div className="flex h-[25px] items-center justify-end rounded-t bg-[#89aad8] pr-[7px]">
      <button type="button" aria-label="关闭工具面板">
        <Svg w={10} h={10}><path d="m1 1 8 8M9 1 1 9" stroke="#fff" strokeWidth="1.500" /></Svg>
      </button>
    </div>
    {paletteItems.map((item) => (
      <button
        key={item.label}
        type="button"
        className="flex h-[59px] w-full flex-col items-center gap-0.5 pt-2 text-xs leading-[20px] text-[#666]"
      >
        <Svg w={24} h={26}>{item.icon}</Svg>
        {item.label}
      </button>
    ))}
  </div>
);

export default function App() {
  const [current, setCurrent] = useState("4");

  return (
    <div className={`relative flex h-screen flex-col overflow-hidden bg-white ${UI_FONT}`}>
      <TitleBar />
      <RibbonTabs />
      <Ribbon />
      <div className="flex min-h-0 flex-1">
        <Sidebar />
        <div className="flex min-w-0 flex-1 flex-col">
          <DocTabs />
          <div className="flex min-h-0 flex-1">
            <div className="flex min-w-0 flex-1 flex-col">
              <div className="flex shrink-0">
                <svg className="h-[18px] w-[17px] shrink-0 bg-white" aria-hidden="true">
                  <path d="M0 9.500h16M10.500 0v17" stroke="#444" strokeDasharray="1 1" />
                  <path d="M0 17.500h17M16.500 0v18" stroke="#000" />
                </svg>
                <HorizontalRuler />
              </div>
              <div className="flex min-h-0 flex-1">
                <VerticalRuler />
                <Canvas />
              </div>
            </div>
            <div className="flex w-[7px] shrink-0 flex-col overflow-hidden bg-[#f1f2f4]">
              <span className="mt-2 ml-1"><Svg w={7} h={4}><path d="M0 4h7L4 0z" fill="#555" /></Svg></span>
              <span className="mt-[87px] ml-px h-5 w-4 shrink-0 rounded-sm border border-[#8f949c] bg-white" />
              <span className="mt-auto mb-2 ml-1"><Svg w={7} h={4}><path d="M0 0h7L4 4z" fill="#555" /></Svg></span>
            </div>
          </div>
          <div className="flex h-[9px] shrink-0 items-center justify-center border-y border-[#8d99ab] bg-[#dde8f5] pl-2">
            <span className="flex h-full w-[100px] items-center justify-center bg-[#e6e6e6]">
              <Caret />
            </span>
          </div>
          <PageStrip current={current} onSelect={setCurrent} />
        </div>
      </div>
      <Palette />
      <div className="pointer-events-none absolute top-[45px] left-[122px] z-30 h-[209px] w-[192px] border-[6px] border-[#fc3636]" />
    </div>
  );
}
